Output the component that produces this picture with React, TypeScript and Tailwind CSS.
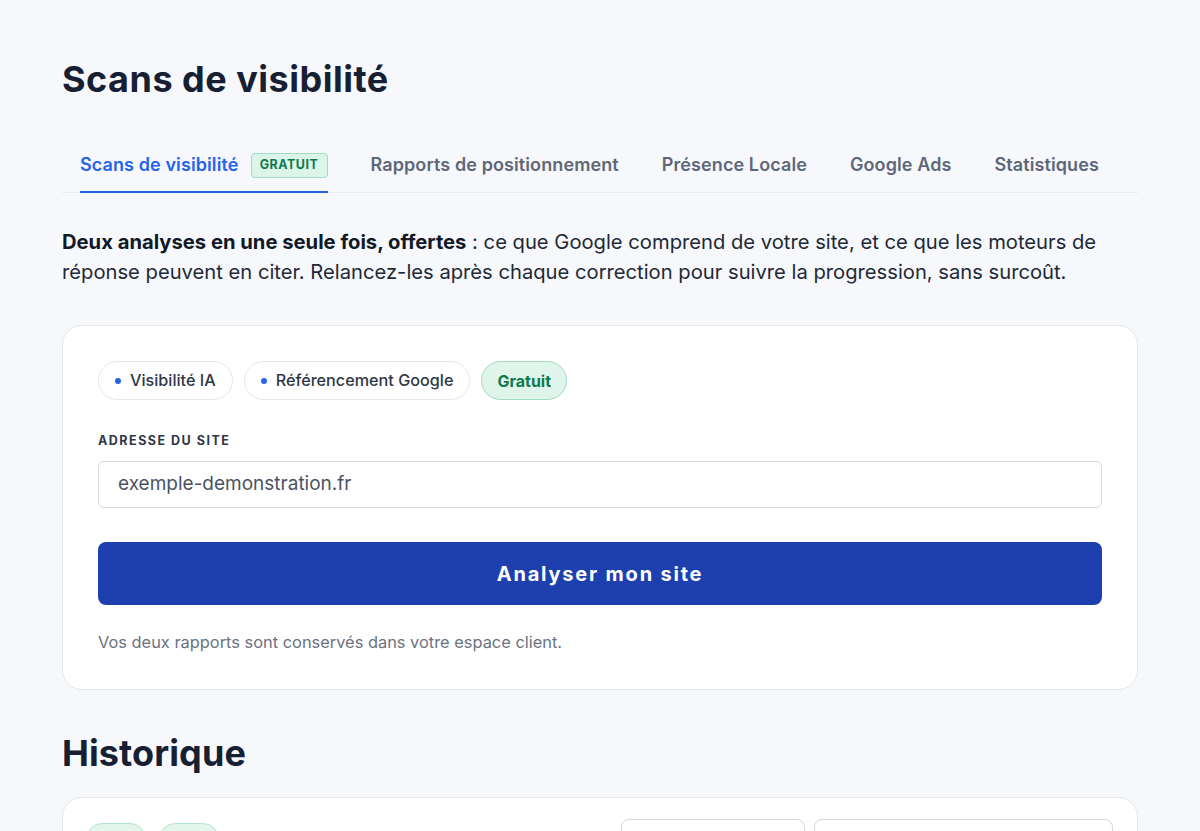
import React from "react";

const HEAD = { fontFamily: 'Inter, "Noto Sans", sans-serif' };

function Tab({ label, active, badge }: { label: string; active?: boolean; badge?: boolean }) {
  return (
    <div
      className={
        "flex items-center gap-3 pb-[12px] -mb-px border-b-2 " +
        (active ? "border-[#2563eb]" : "border-transparent")
      }
    >
      <span
        className={
          "text-[18px] leading-[28px] font-semibold tracking-[0.1px] " +
          (active ? "text-[#2563eb]" : "text-[#5f6779]")
        }
      >
        {label}
      </span>
      {badge && (
        <span className="w-[77px] h-[25px] flex items-center justify-center rounded-[4px] bg-[#dcf5ea] border border-[#9fdcc0] text-[#0f7a4e] text-[12.5px] font-bold tracking-[0.04em]">
          GRATUIT
        </span>
      )}
    </div>
  );
}

function Pill({ label }: { label: string }) {
  return (
    <div className="h-[39px] px-4 flex items-center gap-[9px] rounded-full border border-[#e5e7eb] bg-white">
      <span className="w-[6px] h-[6px] rounded-full bg-[#2563eb]" />
      <span className="text-[16.2px] font-medium text-[#2f3746]">{label}</span>
    </div>
  );
}

export default function App() {
  return (
    <div
      className="min-h-[831px] bg-[#f6f8fb] text-[#1f2937] overflow-hidden"
      style={{ fontFamily: 'Inter, "Noto Sans", sans-serif' }}
    >
      <div className="px-[62px] pt-[58px]">
        <h1 className="text-[36px] leading-[43px] font-bold text-[#172033] tracking-[0.5px]" style={HEAD}>
          Scans de visibilité
        </h1>

        <div className="mt-[50px] flex items-end gap-[43px] pl-[18px] border-b border-[#e8ebf0]">
          <Tab label="Scans de visibilité" active badge />
          <Tab label="Rapports de positionnement" />
          <Tab label="Présence Locale" />
          <Tab label="Google Ads" />
          <Tab label="Statistiques" />
        </div>

        <p className="mt-[34px] text-[20.2px] leading-[30px] text-[#1f2937]">
          <strong className="font-bold text-[#111827]">Deux analyses en une seule fois, offertes</strong> : ce que
          Google comprend de votre site, et ce que les moteurs de réponse peuvent en citer. Relancez-les après chaque
          correction pour suivre la progression, sans surcoût.
        </p>

        <div className="mt-[38px] bg-white border border-[#e5e7eb] rounded-[20px] px-[35px] pt-[35px] pb-[36px]">
          <div className="flex items-center gap-[11px]">
            <Pill label="Visibilité IA" />
            <Pill label="Référencement Google" />
            <div className="h-[39px] px-[15px] flex items-center rounded-full border border-[#9fdcc0] bg-[#dff5ec] text-[#0f7a4e] text-[16px] font-bold">
              Gratuit
            </div>
          </div>

          <div className="mt-[33px] text-[12.5px] leading-[16px] font-bold tracking-[0.12em] text-[#2f3746]" style={HEAD}>
            ADRESSE DU SITE
          </div>
          <div className="mt-[12px] h-[47px] rounded-[6px] border border-[#d5dae1] flex items-center px-[19px] text-[19px] text-[#4b5363]">
            exemple-demonstration.fr
          </div>

          <button className="mt-[34px] w-full h-[63px] rounded-[8px] bg-[#1e40af] text-white text-[20px] font-bold tracking-[1.8px]" style={HEAD}>
            Analyser mon site
          </button>

          <p className="mt-[26px] text-[16.4px] leading-[22px] text-[#6b7280]">
            Vos deux rapports sont conservés dans votre espace client.
          </p>
        </div>

        <h2 className="mt-[42px] text-[36px] leading-[43px] font-bold text-[#172033] tracking-[0.1px]" style={HEAD}>
          Historique
        </h2>

        <div className="mt-[22px] bg-white border border-[#e5e7eb] rounded-[20px] pl-[23px] pr-[24px] pt-[21px] h-[120px] flex items-start">
          <div className="flex items-center gap-[13px]">
            <span className="w-[60px] h-[32px] rounded-full bg-[#e3f6ee] border border-[#b5e6cf]" />
            <span className="w-[60px] h-[32px] rounded-full bg-[#e3f6ee] border border-[#b5e6cf]" />
            <span className="ml-[13px] mt-[12px] text-[18px] font-bold text-[#172033]">il y a 2 jours</span>
          </div>
          <div className="ml-auto flex gap-[9px]">
            <div className="w-[184px] h-[44px] rounded-[8px] border border-[#d5d8dd]" />
            <div className="w-[299px] h-[44px] rounded-[8px] border border-[#d5d8dd]" />
          </div>
        </div>
      </div>
    </div>
  );
}
